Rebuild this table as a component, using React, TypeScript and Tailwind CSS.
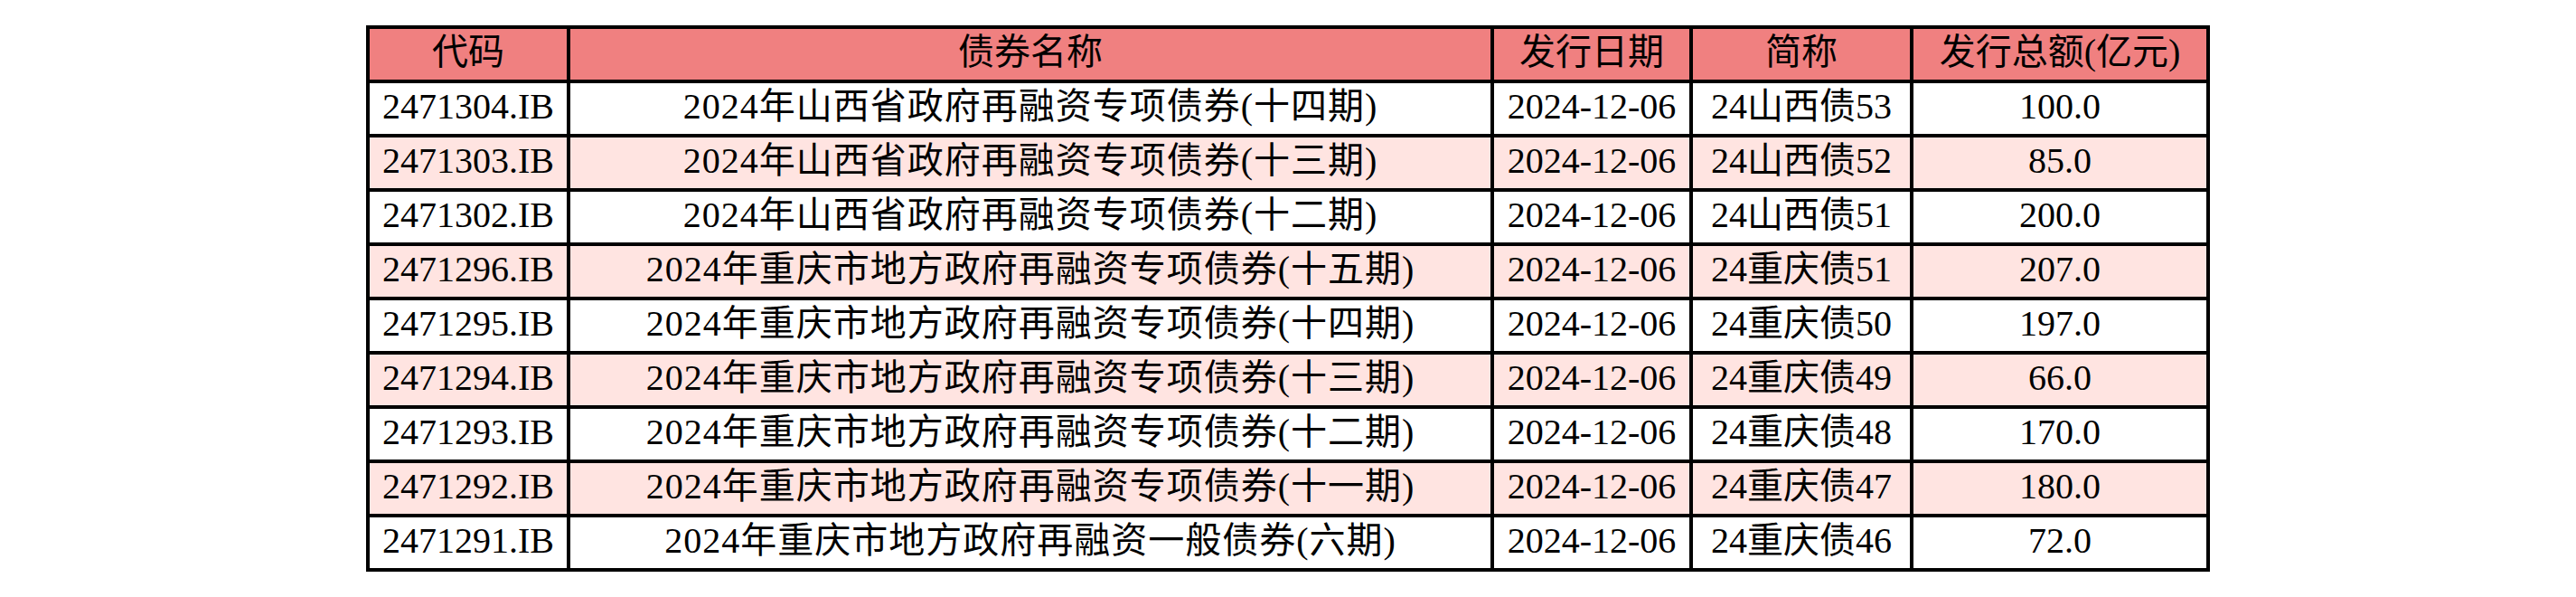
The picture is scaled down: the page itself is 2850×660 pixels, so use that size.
const headers = ['代码', '债券名称', '发行日期', '简称', '发行总额(亿元)'];

const rows = [
  ['2471304.IB', '2024年山西省政府再融资专项债券(十四期)', '2024-12-06', '24山西债53', '100.0'],
  ['2471303.IB', '2024年山西省政府再融资专项债券(十三期)', '2024-12-06', '24山西债52', '85.0'],
  ['2471302.IB', '2024年山西省政府再融资专项债券(十二期)', '2024-12-06', '24山西债51', '200.0'],
  ['2471296.IB', '2024年重庆市地方政府再融资专项债券(十五期)', '2024-12-06', '24重庆债51', '207.0'],
  ['2471295.IB', '2024年重庆市地方政府再融资专项债券(十四期)', '2024-12-06', '24重庆债50', '197.0'],
  ['2471294.IB', '2024年重庆市地方政府再融资专项债券(十三期)', '2024-12-06', '24重庆债49', '66.0'],
  ['2471293.IB', '2024年重庆市地方政府再融资专项债券(十二期)', '2024-12-06', '24重庆债48', '170.0'],
  ['2471292.IB', '2024年重庆市地方政府再融资专项债券(十一期)', '2024-12-06', '24重庆债47', '180.0'],
  ['2471291.IB', '2024年重庆市地方政府再融资一般债券(六期)', '2024-12-06', '24重庆债46', '72.0'],
];

export default function App() {
  return (
    <div className="w-[2850px] h-[660px] bg-white flex items-center justify-center font-[family-name:'Liberation_Serif','Noto_Sans_CJK_SC',serif] text-[40px] leading-none text-black">
      <div className="w-[2040px] bg-black p-[4px] grid grid-cols-[218px_1018px_216px_240px_324px] auto-rows-[56px] gap-[4px]">
        {headers.map((h) => (
          <div key={h} className="bg-[#f08080] flex items-center justify-center pb-[4px]">
            {h}
          </div>
        ))}
        {rows.map((row, i) =>
          row.map((cell, j) => (
            <div
              key={`${i}-${j}`}
              className={`${i % 2 === 1 ? 'bg-[#ffe4e1]' : 'bg-white'} ${j === 1 ? 'tracking-[1px]' : ''} flex items-center justify-center pb-[4px] whitespace-nowrap`}
            >
              {cell}
            </div>
          ))
        )}
      </div>
    </div>
  );
}
